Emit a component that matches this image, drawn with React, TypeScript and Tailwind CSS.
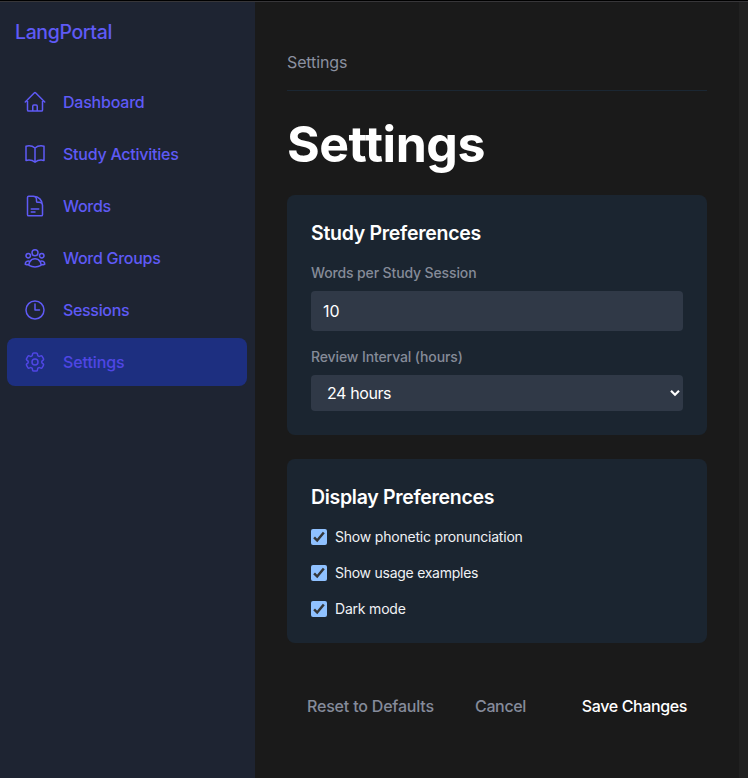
import React, { useState } from "react";
import {
  HiOutlineHome,
  HiOutlineBookOpen,
  HiOutlineDocumentText,
  HiOutlineUserGroup,
  HiOutlineClock,
  HiOutlineCog6Tooth,
} from "react-icons/hi2";

const navItems = [
  { label: "Dashboard", icon: HiOutlineHome, tracking: "tracking-[-0.22px]" },
  { label: "Study Activities", icon: HiOutlineBookOpen, tracking: "tracking-[-0.25px]" },
  { label: "Words", icon: HiOutlineDocumentText, tracking: "tracking-[-0.3px]" },
  { label: "Word Groups", icon: HiOutlineUserGroup, tracking: "tracking-[-0.28px]" },
  { label: "Sessions", icon: HiOutlineClock, tracking: "tracking-[-0.33px]" },
  { label: "Settings", icon: HiOutlineCog6Tooth, tracking: "tracking-[-0.1px]", active: true },
];

function Sidebar() {
  return (
    <aside className="w-[255px] shrink-0 bg-[#1e2432]">
      <div className="flex h-[60px] items-center pt-0.5 pl-[15px] text-[19.5px] font-medium tracking-[-0.37px] text-[#5f5af6]">
        <span>LangPortal</span>
      </div>
      <nav className="mt-4 flex flex-col gap-1 pr-2 pl-[7px]">
        {navItems.map(({ label, icon: Icon, tracking, active }) => (
          <a
            key={label}
            className={`flex h-12 items-center rounded-lg pl-4 text-base font-medium ${tracking} ${
              active ? "bg-[#1d2f80] text-[#4f46e5]" : "text-[#5f5af6]"
            }`}
          >
            <Icon className="mr-4 size-6" />
            <span>{label}</span>
          </a>
        ))}
      </nav>
    </aside>
  );
}

function Checkbox({ label, tracking }: { label: string; tracking: string }) {
  const [checked, setChecked] = useState(true);
  return (
    <button type="button" className="flex h-5 items-center gap-2" onClick={() => setChecked(!checked)}>
      <span className="flex size-4 items-center justify-center rounded-[2px] bg-[#8fc1ff]">
        {checked && (
          <svg viewBox="0 0 16 16" className="size-4" fill="none" stroke="#343638" strokeWidth="2.5">
            <path d="M3.1 8.3 6.2 11.5 12.8 3.5" />
          </svg>
        )}
      </span>
      <span className={`text-sm text-[#f0f2f5] ${tracking}`}>{label}</span>
    </button>
  );
}

export default function App() {
  return (
    <div className="flex h-[778px] w-[748px] flex-col overflow-hidden bg-[#1a1a1a] font-['Inter','Liberation_Sans',sans-serif]">
      <div className="h-px shrink-0 bg-black" />
      <div className="h-px shrink-0 bg-[#373639]" />
      <div className="flex min-h-0 flex-1">
        <Sidebar />
        <main className="flex flex-1 flex-col pr-8 pl-8">
          <div className="flex h-[89px] shrink-0 items-end border-b border-[#1b2733] pb-4 text-base leading-6 text-[#8b90a0]">
            <span className="tracking-[-0.12px]">Settings</span>
          </div>
          <h1 className="mt-[25px] text-[50px] leading-[56px] font-bold tracking-[-0.45px] text-white">
            <span>Settings</span>
          </h1>

          <section className="mt-[23px] h-60 rounded-lg bg-[#1b2530] px-6 pt-6">
            <h2 className="text-[19.5px] leading-7 font-semibold tracking-[-0.28px] text-white"><span>Study Preferences</span></h2>
            <div className="mt-4 text-sm leading-5 font-medium tracking-[-0.13px] text-[#858b98]"><span>Words per Study Session</span></div>
            <div className="mt-2 flex h-10 items-center rounded bg-[#303947] px-3 text-base text-white"><span>10</span></div>
            <div className="mt-4 text-sm leading-5 font-medium tracking-[-0.11px] text-[#858b98]"><span>Review Interval (hours)</span></div>
            <div className="mt-2 flex h-9 items-center justify-between rounded bg-[#303947] pr-[3px] pl-4 text-base tracking-[-0.4px] text-white">
              <span>24 hours</span>
              <svg viewBox="0 0 10 8" className="h-2 w-2.5" fill="none" stroke="white" strokeWidth="2.2">
                <path d="M1 1.8 5 5.7 9 1.8" />
              </svg>
            </div>
          </section>

          <section className="mt-6 h-[184px] rounded-lg bg-[#1b2530] px-6 pt-6">
            <h2 className="text-[19.5px] leading-7 font-semibold tracking-[-0.3px] text-white"><span>Display Preferences</span></h2>
            <div className="mt-4 flex flex-col gap-4">
              <Checkbox label="Show phonetic pronunciation" tracking="tracking-[-0.2px]" />
              <Checkbox label="Show usage examples" tracking="tracking-[-0.26px]" />
              <Checkbox label="Dark mode" tracking="tracking-[-0.2px]" />
            </div>
          </section>

          <div className="mt-[51px] flex h-6 items-center px-5 text-base font-medium text-[#858b9b]">
            <button className="w-[168px] text-left tracking-[-0.19px]"><span>Reset to Defaults</span></button>
            <button className="tracking-[-0.35px]"><span>Cancel</span></button>
            <button className="ml-auto tracking-[-0.38px] text-white"><span>Save Changes</span></button>
          </div>
        </main>
        <div className="w-[9px] shrink-0 bg-[#212121]" />
      </div>
    </div>
  );
}
